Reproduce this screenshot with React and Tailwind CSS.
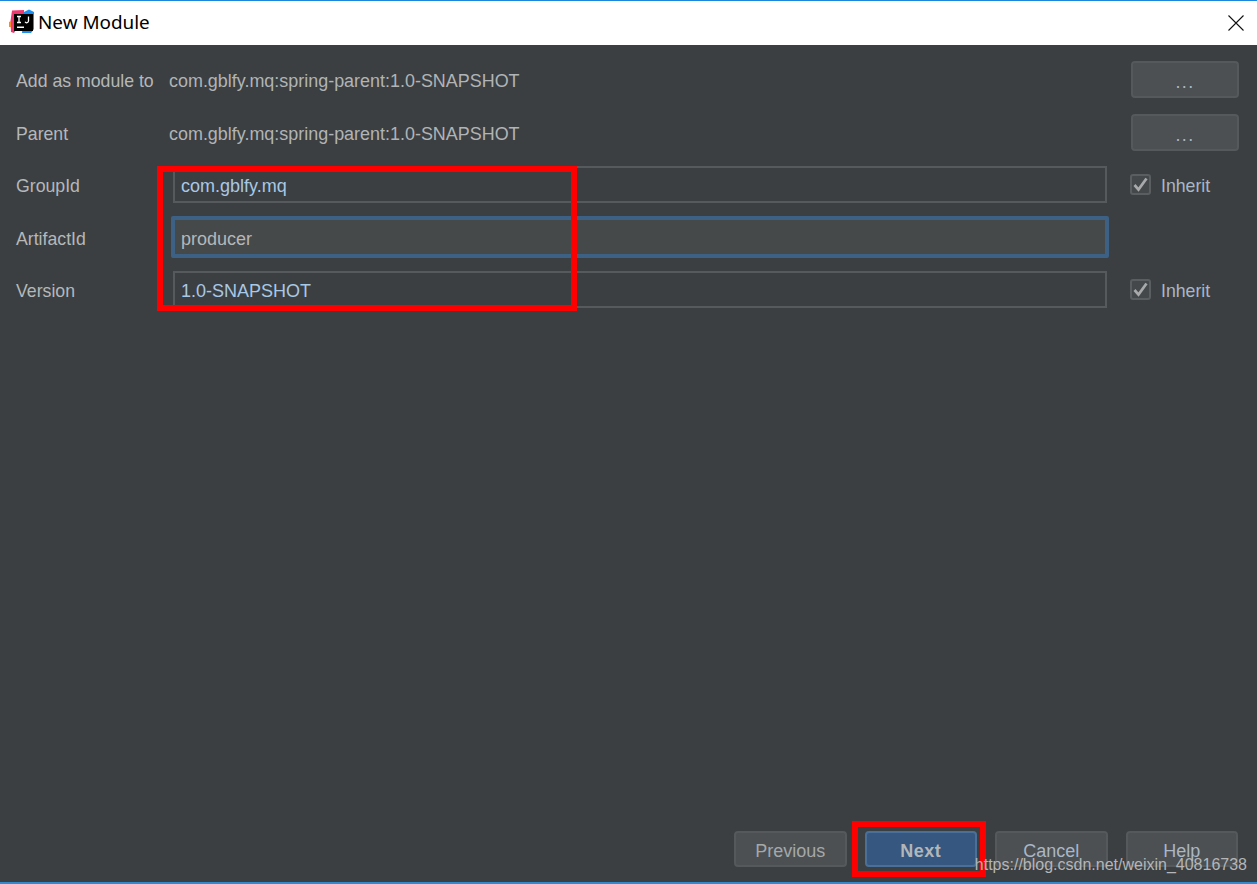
import React from "react";

const font = "font-['Liberation_Sans',Arial,sans-serif]";

function IdeaLogo() {
  return (
    <svg width="26" height="26" viewBox="0 0 26 26" className="shrink-0 mb-[2px]">
      <polygon points="3,1.5 15,1 15,8 5,24 2,23 1.5,12" fill="#f0376e" />
      <polygon points="0,13 2,12 2,18 0,18" fill="#f98b2a" />
      <polygon points="15,3 20,0.5 25,3 25,20 22,24 13,24" fill="#1c8ff2" />
      <rect x="5" y="5" width="19" height="17" fill="#000" />
      <rect x="8" y="17.5" width="7" height="1.5" fill="#fff" />
      <path d="M8 7.5h4M10 7.5v6M8 13.5h4M19.5 7.5v4.4a1.8 1.8 0 0 1-3.4 .9" stroke="#fff" strokeWidth="1.3" fill="none" />
    </svg>
  );
}

function Label({ children, className }) {
  return <div className={`w-[153px] shrink-0 text-[17.7px] text-[#b4b8ba] ${className || "pt-[3px]"}`}>{children}</div>;
}

function BrowseButton() {
  return (
    <button className="w-[108px] h-[37px] shrink-0 pt-[1px] rounded-[4px] border-2 border-[#55595b] bg-[#4c5052] text-[18px] tracking-[1.3px] text-[#a9b7c6] leading-[36px]">
      ...
    </button>
  );
}

function Inherit() {
  return (
    <div className="ml-[23px] flex items-center gap-[10px]">
      <div className="w-[21px] h-[21px] rounded-[3px] border-2 border-[#5a5e60] bg-[#45484a] flex items-center justify-center">
        <svg width="15" height="15" viewBox="0 0 15 15">
          <path d="M1.5 8l4 4.6L13.5 1.5" stroke="#a7a9ab" strokeWidth="2.7" fill="none" />
        </svg>
      </div>
      <span className="pt-[3px] text-[17.7px] text-[#a9b7c6]">{"Inherit"}</span>
    </div>
  );
}

function TextRow({ label, value, focused, inherit, rowClass }) {
  return (
    <div className={`flex items-center pl-[16px] ${rowClass}`}>
      <Label className={focused ? "pt-[5px]" : "pt-[3px]"}>{label}</Label>
      {focused ? (
        <div className="ml-[2px] w-[938px] h-[42px] border-[4px] border-[#3d6185] rounded-[2px] bg-[#45494a] flex items-center pl-[6px] pt-[5px] text-[18px] text-[#b4b8ba]">
          {value}
        </div>
      ) : (
        <div className="ml-[4px] w-[934px] h-[37px] border-2 border-[#565a5c] bg-[#3c3f41] flex items-center pl-[6px] pt-[3px] text-[18px] text-[#a8c8e6]">
          {value}
        </div>
      )}
      {inherit && <Inherit />}
    </div>
  );
}

function FooterButton({ children, primary, bluish }) {
  return (
    <button
      className={`w-[112.5px] h-[36px] pt-[4px] rounded-[4px] border-2 text-[18px] leading-none ${
        primary
          ? "border-[#4a709a] bg-[#365880] text-[#b2b6b9] font-bold tracking-[0.5px]"
          : bluish
            ? "border-[#55595b] bg-[#4c5052] text-[#a9b7c6]"
            : "border-[#55595b] bg-[#4c5052] text-[#a4a8aa]"
      }`}
    >
      {children}
    </button>
  );
}

export default function App() {
  return (
    <div className={`relative w-[1257px] h-[884px] overflow-hidden flex flex-col bg-[#3c3f41] ${font}`}>
      {/* Title bar */}
      <div className="h-[45px] shrink-0 bg-white border-t border-[#1a87dc] flex items-center pl-[9px] pr-[13px]">
        <IdeaLogo />
        <span className="ml-[3px] mb-[2px] text-[18.9px] text-black font-['Noto_Sans',sans-serif]">New Module</span>
        <svg width="16" height="16" viewBox="0 0 16 16" className="ml-auto">
          <path d="M0.5 0.5L15.5 15.5M15.5 0.5L0.5 15.5" stroke="#111" strokeWidth="1.1" />
        </svg>
      </div>

      {/* Form */}
      <div className="flex-1 flex flex-col pt-[16px]">
        <div className="flex items-center pl-[16px] pr-[18px]">
          <Label>Add as module to</Label>
          <span className="pt-[3px] text-[17.95px] text-[#b0b4b6]">com.gblfy.mq:spring-parent:1.0-SNAPSHOT</span>
          <div className="ml-auto"><BrowseButton /></div>
        </div>
        <div className="flex items-center pl-[16px] pr-[18px] mt-[16px]">
          <Label>Parent</Label>
          <span className="pt-[3px] text-[17.95px] text-[#b0b4b6]">com.gblfy.mq:spring-parent:1.0-SNAPSHOT</span>
          <div className="ml-auto"><BrowseButton /></div>
        </div>
        <TextRow rowClass="mt-[15px]" label="GroupId" value="com.gblfy.mq" inherit />
        <TextRow rowClass="mt-[13px]" label="ArtifactId" value="producer" focused />
        <TextRow rowClass="mt-[13px]" label="Version" value="1.0-SNAPSHOT" inherit />
      </div>

      {/* Footer */}
      <div className="shrink-0 h-[53px] flex justify-end gap-[18px] pr-[19px] border-b-2 border-[#2f8ad0]">
        <FooterButton>Previous</FooterButton>
        <FooterButton primary>Next</FooterButton>
        <FooterButton bluish>Cancel</FooterButton>
        <FooterButton bluish>Help</FooterButton>
      </div>

      {/* Annotations drawn over the screenshot */}
      <div className="absolute left-[157px] top-[166px] w-[420px] h-[145px] border-[6px] border-[#ff0000]" />
      <div className="absolute left-[852px] top-[821px] w-[134px] h-[56px] border-[6px] border-[#ff0000]" />
      <div className="absolute right-[10px] top-[855px] text-[16px] leading-[20px] text-[#b4b6b8]">
        https://blog.csdn.net/weixin_40816738
      </div>
    </div>
  );
}
